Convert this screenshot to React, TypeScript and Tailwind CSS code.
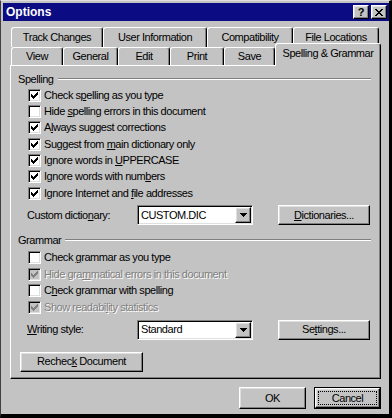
import React from "react";

const raised =
  "border border-solid border-t-white border-l-white border-r-black border-b-black shadow-[inset_-1px_-1px_0_#808080,inset_1px_1px_0_#dfdfdf]";
const sunken =
  "border border-solid border-t-[#808080] border-l-[#808080] border-r-white border-b-white shadow-[inset_1px_1px_0_#000,inset_-1px_-1px_0_#dfdfdf]";

const CHECK = ["......X", ".....XX", "X...XXX", "XX.XXX.", "XXXXX..", ".XXX...", "..X...."];

function CheckMark({ color }: { color: string }) {
  const rects: React.ReactElement[] = [];
  CHECK.forEach((row, y) =>
    row.split("").forEach((c, x) => {
      if (c === "X") rects.push(<rect key={`${x}-${y}`} x={x} y={y} width={1} height={1} fill={color} />);
    })
  );
  return (
    <svg width="7" height="7" viewBox="0 0 7 7" shapeRendering="crispEdges">
      {rects}
    </svg>
  );
}

function Box({ checked, disabled }: { checked?: boolean; disabled?: boolean }) {
  return (
    <span
      className={`w-[13px] h-[13px] shrink-0 flex items-center justify-center ${sunken} ${
        disabled ? "bg-[#c3c3c3]" : "bg-white"
      }`}
    >
      {checked && <CheckMark color={disabled ? "#808080" : "#000"} />}
    </span>
  );
}

function Row({
  children,
  checked,
  disabled,
  h,
}: {
  children: React.ReactNode;
  checked?: boolean;
  disabled?: boolean;
  h: string;
}) {
  return (
    <div className={`flex items-center pl-[17px] ${h}`}>
      <Box checked={checked} disabled={disabled} />
      <span
        className={`ml-[3px] whitespace-nowrap ${
          disabled ? "text-[#808080] [text-shadow:1px_1px_0_#fff]" : "text-black"
        }`}
      >
        {children}
      </span>
    </div>
  );
}

function U({ children }: { children: React.ReactNode }) {
  return <span className="underline underline-offset-[1px] decoration-1">{children}</span>;
}

function Header({ label }: { label: string }) {
  return (
    <div className="flex items-center h-[14px] pl-[7px]">
      <span className="text-black">{label}</span>
      <div className="flex-1 ml-[4px] mr-[9px] h-[2px] border-t border-t-[#808080] border-b border-b-white" />
    </div>
  );
}

function Combo({ value }: { value: string }) {
  return (
    <div className={`w-[116px] h-[20px] bg-white flex items-center p-[1px] ${sunken}`}>
      <span className="flex-1 pl-[2px] text-black">{value}</span>
      <span className={`w-[16px] h-[16px] bg-[#c3c3c3] flex items-center justify-center ${raised}`}>
        <svg width="7" height="4" viewBox="0 0 7 4" shapeRendering="crispEdges">
          <rect x="0" y="0" width="7" height="1" fill="#000" />
          <rect x="1" y="1" width="5" height="1" fill="#000" />
          <rect x="2" y="2" width="3" height="1" fill="#000" />
          <rect x="3" y="3" width="1" height="1" fill="#000" />
        </svg>
      </span>
    </div>
  );
}

function Btn({ children, cls }: { children: React.ReactNode; cls: string }) {
  return (
    <div className={`bg-[#c3c3c3] flex items-center justify-center text-black ${raised} ${cls}`}>
      <span className="whitespace-nowrap">{children}</span>
    </div>
  );
}

function Tab({ children, cls }: { children: React.ReactNode; cls: string }) {
  return (
    <div
      className={`bg-[#c3c3c3] flex items-center justify-center whitespace-nowrap text-black rounded-t-[3px] border-solid border-t border-l border-r border-t-white border-l-white border-r-black shadow-[inset_-1px_0_0_#808080] ${cls}`}
    >
      <span>{children}</span>
    </div>
  );
}

export default function App() {
  return (
    <div
      className="w-[392px] h-[418px] bg-[#c3c3c3] flex flex-col border-solid border-l border-l-[#404040] border-t border-t-[#dfdfdf] border-r-[3px] border-r-black border-b-[4px] border-b-black pl-[2px] pt-[2px] text-[11px] tracking-[-0.45px] leading-none overflow-hidden"
      style={{ fontFamily: '"Liberation Sans", Arial, sans-serif' }}
    >
      {/* Title bar */}
      <div className="h-[18px] bg-[#0b0b84] flex items-center pl-[3px] pr-[2px] shrink-0">
        <span className="text-white font-bold text-[12px] tracking-[0px] flex-1">Options</span>
        <div className={`w-[16px] h-[14px] bg-[#c3c3c3] flex items-center justify-center ${raised}`}>
          <span className="font-bold text-[11px] text-black tracking-[0px] mt-[1px]">?</span>
        </div>
        <div className={`ml-[2px] w-[16px] h-[14px] bg-[#c3c3c3] flex items-center justify-center ${raised}`}>
          <svg width="8" height="7" viewBox="0 0 8 7" shapeRendering="crispEdges">
            <path d="M0 0h2v1h1v1h2V1h1V0h2v1H7v1H6v1H5v1h1v1h1v1h1v1H6V6H5V5H3v1H2v1H0V6h1V5h1V4h1V3H2V2H1V1H0z" fill="#000" />
          </svg>
        </div>
      </div>

      {/* Tabs */}
      <div className="flex ml-[8px] mt-[6px] h-[20px] shrink-0">
        <Tab cls="w-[92px] h-[20px] pb-[1px]">Track Changes</Tab>
        <Tab cls="w-[104px] h-[20px] pb-[1px]">User Information</Tab>
        <Tab cls="w-[86px] h-[20px] pb-[1px]">Compatibility</Tab>
        <Tab cls="w-[86px] h-[20px] pb-[1px]">File Locations</Tab>
      </div>
      <div className="flex ml-[8px] h-[18px] shrink-0 items-start">
        <Tab cls="w-[52px] h-[18px]">View</Tab>
        <Tab cls="w-[55px] h-[18px]">General</Tab>
        <Tab cls="w-[52px] h-[18px]">Edit</Tab>
        <Tab cls="w-[54px] h-[18px]">Print</Tab>
        <Tab cls="w-[51px] h-[18px]">Save</Tab>
        <Tab cls="w-[106px] h-[23px] -mt-[4px] relative z-10 pb-[3px]">Spelling &amp; Grammar</Tab>
      </div>

      {/* Panel */}
      <div
        className={`ml-[7px] w-[371px] h-[314px] shrink-0 flex flex-col pt-[6px] border-solid border border-t-white border-l-white border-r-black border-b-black shadow-[inset_-1px_-1px_0_#808080]`}
      >
        <Header label="Spelling" />
        <div className="mt-[1px] flex flex-col">
          <Row h="h-[16.33px]" checked>
            Check s<U>p</U>elling as you type
          </Row>
          <Row h="h-[16.33px]">
            Hide <U>s</U>pelling errors in this document
          </Row>
          <Row h="h-[16.33px]" checked>
            A<U>l</U>ways suggest corrections
          </Row>
          <Row h="h-[16.33px]" checked>
            Suggest from <U>m</U>ain dictionary only
          </Row>
          <Row h="h-[16.33px]" checked>
            Ignore words in <U>U</U>PPERCASE
          </Row>
          <Row h="h-[16.33px]" checked>
            Ignore words with num<U>b</U>ers
          </Row>
          <Row h="h-[16.33px]" checked>
            Ignore Internet and <U>f</U>ile addresses
          </Row>
        </div>
        <div className="mt-[4px] h-[20px] flex items-center pl-[16px]">
          <span className="w-[110px] text-black whitespace-nowrap">
            Custom dictio<U>n</U>ary:
          </span>
          <Combo value="CUSTOM.DIC" />
          <Btn cls="ml-[25px] w-[92px] h-[20px]">
            <U>D</U>ictionaries...
          </Btn>
        </div>

        <div className="mt-[8px]">
          <Header label="Grammar" />
        </div>
        <div className="mt-[2px] flex flex-col">
          <Row h="h-[16.67px]">
            Check <U>g</U>rammar as you type
          </Row>
          <Row h="h-[16.67px]" checked disabled>
            Hide gra<U>m</U>matical errors in this document
          </Row>
          <Row h="h-[16.67px]">
            C<U>h</U>eck grammar with spelling
          </Row>
          <Row h="h-[16.67px]" checked disabled>
            Show readabi<U>l</U>ity statistics
          </Row>
        </div>
        <div className="mt-[4px] h-[20px] flex items-center pl-[16px]">
          <span className="w-[110px] text-black whitespace-nowrap">
            <U>W</U>riting style:
          </span>
          <Combo value="Standard" />
          <Btn cls="ml-[25px] w-[92px] h-[20px]">
            Se<U>t</U>tings...
          </Btn>
        </div>
        <div className="mt-[12px] pl-[9px]">
          <Btn cls="w-[123px] h-[20px]">
            Rechec<U>k</U> Document
          </Btn>
        </div>
      </div>

      {/* Bottom buttons */}
      <div className="flex justify-end pr-[8px] mt-[8px] gap-[8px]">
        <Btn cls="w-[67px] h-[22px]">OK</Btn>
        <div className="w-[67px] h-[22px] border border-solid border-black flex">
          <div className={`flex-1 bg-[#c3c3c3] flex p-[2px] ${raised}`}>
            <div className="flex-1 border border-dotted border-black flex items-center justify-center text-black">
              <span>Cancel</span>
            </div>
          </div>
        </div>
      </div>
    </div>
  );
}
